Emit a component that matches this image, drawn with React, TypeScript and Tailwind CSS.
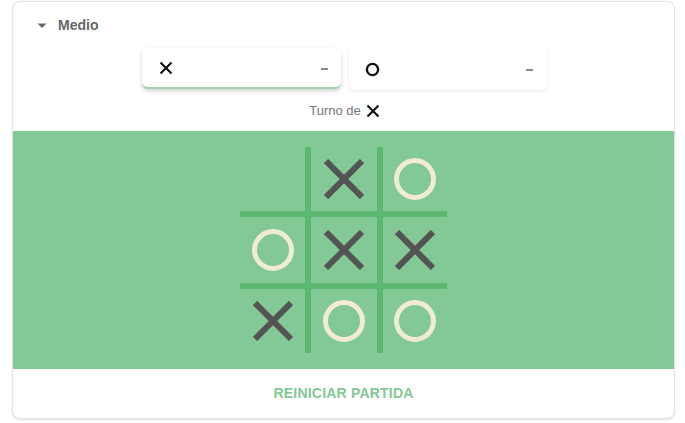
import React from "react";

const XMark = ({ size = 40, stroke = 6, color = "#545454" }: { size?: number; stroke?: number; color?: string }) => (
  <svg width={size} height={size} viewBox={`0 0 ${size} ${size}`}>
    <line x1={2} y1={2} x2={size - 2} y2={size - 2} stroke={color} strokeWidth={stroke} />
    <line x1={size - 2} y1={2} x2={2} y2={size - 2} stroke={color} strokeWidth={stroke} />
  </svg>
);

const OMark = () => (
  <svg width={44} height={44} viewBox="0 0 44 44">
    <circle cx={22} cy={22} r={18.5} fill="none" stroke="#f2ebd3" strokeWidth={5} />
  </svg>
);

const SmallX = () => (
  <svg width={14} height={14} viewBox="0 0 14 14">
    <line x1={1.5} y1={1.5} x2={12.5} y2={12.5} stroke="#111" strokeWidth={2.2} />
    <line x1={12.5} y1={1.5} x2={1.5} y2={12.5} stroke="#111" strokeWidth={2.2} />
  </svg>
);

const SmallO = () => (
  <svg width={15} height={15} viewBox="0 0 15 15">
    <circle cx={7.5} cy={7.5} r={5.6} fill="none" stroke="#111" strokeWidth={2.3} />
  </svg>
);

const board: ("X" | "O" | "")[] = ["", "X", "O", "O", "X", "X", "X", "O", "O"];

export default function App() {
  const cols = ["w-[65px]", "w-[66px]", "w-[64px]"];
  const rows = ["h-[64px]", "h-[66px]", "h-[64px]"];
  return (
    <div className="w-[685px] h-[423px] bg-white" style={{ fontFamily: '"Liberation Sans", Arial, sans-serif' }}>
      <div className="ml-[12px] mt-px w-[663px] h-[418px] rounded-lg border border-[#e3e3e3] shadow-[0_1px_2px_rgba(0,0,0,0.12)] overflow-hidden flex flex-col bg-white">
        <div className="h-[46px] flex items-center pl-[24px] pt-[1px]">
          <svg width={10} height={6} viewBox="0 0 10 6" className="mr-[11px] mt-[1px]">
            <polygon points="0.5,0.5 9.5,0.5 5,5" fill="#666" />
          </svg>
          <span className="text-[14px] font-bold text-[#666]">Medio</span>
        </div>
        <div className="flex justify-center gap-[8px] pl-[1px]">
          <div className="w-[199px] h-[41px] rounded-[6px] bg-white shadow-[0_2px_4px_rgba(0,0,0,0.18)] border-b-2 border-[#a3d3b0] flex items-center justify-between pl-[17px] pr-[13px]">
            <SmallX />
            <span className="block w-[7px] h-[2px] bg-[#888] mt-[2px]" />
          </div>
          <div className="w-[198px] h-[42px] rounded-[6px] bg-white shadow-[0_1px_3px_rgba(0,0,0,0.1)] flex items-center justify-between pl-[16px] pr-[14px]">
            <SmallO />
            <span className="block w-[7px] h-[2px] bg-[#888] mt-[2px]" />
          </div>
        </div>
        <div className="h-[41px] flex items-center justify-center gap-[5px] text-[13px] text-[#777] pl-[2px]">
          <span>Turno de</span>
          <SmallX />
        </div>
        <div className="h-[238px] bg-[#83c995] flex items-center justify-center">
          <div className="grid grid-cols-[65px_66px_64px] gap-[6px] bg-[#5cb870]">
            {board.map((v, i) => (
              <div
                key={i}
                className={`${cols[i % 3]} ${rows[Math.floor(i / 3)]} bg-[#83c995] flex items-center justify-center`}
              >
                {v === "X" ? <XMark /> : v === "O" ? <OMark /> : null}
              </div>
            ))}
          </div>
        </div>
        <div className="flex-1 flex items-center justify-center">
          <span className="text-[14px] font-bold text-[#83c995] tracking-[0.2px]">REINICIAR PARTIDA</span>
        </div>
      </div>
    </div>
  );
}
